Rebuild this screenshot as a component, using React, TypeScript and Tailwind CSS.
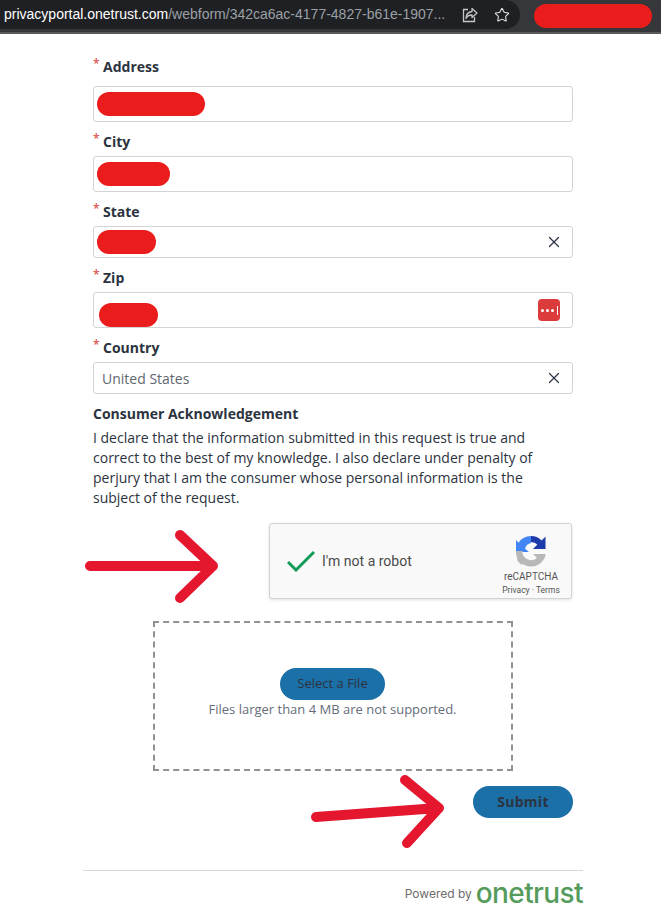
import { ReactNode } from "react";
import { Star, X } from "lucide-react";

function Redact({ w, h = 24, ml = 3, mt = 0 }: { w: number; h?: number; ml?: number; mt?: number }) {
  return (
    <span
      className="block rounded-full bg-[#ea1c1c]"
      style={{ width: w, height: h, marginLeft: ml, marginTop: mt }}
    />
  );
}

function Field({
  label,
  height,
  top = 10,
  gap = 4,
  children,
  right,
}: {
  label: string;
  height: number;
  top?: number;
  gap?: number;
  children?: ReactNode;
  right?: ReactNode;
}) {
  return (
    <div style={{ paddingTop: top }}>
      <label className="relative block h-5 pl-[10px] text-[14px] font-bold leading-5 text-[#2c3340]">
        <span className="absolute left-0 top-[-3px] text-[12px] font-semibold text-[#d9534f]">*</span>
        {label}
      </label>
      <div
        className="flex items-center justify-between rounded-[3px] border border-[#d4d4d4] bg-white pr-[9px]"
        style={{ height, marginTop: gap }}
      >
        {children}
        {right}
      </div>
    </div>
  );
}

function ClearIcon() {
  return <X size={18} strokeWidth={1.6} className="text-[#2c3340]" />;
}

function PasswordIcon() {
  return (
    <span className="mr-[3px] flex h-[22px] w-[22px] items-center justify-center gap-[2px] rounded-[4px] bg-[#dc3b3b]">
      <span className="h-[3px] w-[3px] rounded-full bg-white" />
      <span className="h-[3px] w-[3px] rounded-full bg-white" />
      <span className="h-[3px] w-[3px] rounded-full bg-white" />
      <span className="ml-px h-[9px] w-px bg-white" />
    </span>
  );
}

function ShareIcon() {
  return (
    <svg width="18" height="18" viewBox="0 0 18 18" fill="none" stroke="#c4c7c5" strokeWidth="1.3">
      <path d="M7 3.5H2.5v12h11V11" />
      <path d="M11 2.5l5 4.5-5 4.5V9c-3 0-5 1-6 3.5 0-4 2-6.5 6-7z" strokeLinejoin="round" />
    </svg>
  );
}

function RecaptchaLogo() {
  return (
    <svg width="32" height="32" viewBox="0 0 32 32">
      <path d="M16 1a15 15 0 0 1 10.6 4.4L30.5 1.5V14H18l4.4-4.4A9 9 0 0 0 16 7z" fill="#1c3aa9" />
      <path d="M16 1A15 15 0 0 0 3.5 7.7L1 5v12h13l-4-3.6A8 8 0 0 1 16 8z" fill="#4285f4" />
      <path d="M1 16.5h6.2A9 9 0 0 0 22 23l-4-4h13a15 15 0 0 1-.2 0A15 15 0 0 1 1 16.5z" fill="#b8b8b8" />
      <path d="M1 16h7l-2.5 3 5 5-4 6-4-4z" fill="#b8b8b8" />
    </svg>
  );
}

function Arrow({ className, w, h, d }: { className: string; w: number; h: number; d: string }) {
  return (
    <svg
      className={`absolute ${className}`}
      width={w}
      height={h}
      viewBox={`0 0 ${w} ${h}`}
      fill="none"
      stroke="#e5172f"
      strokeWidth="10"
      strokeLinecap="round"
      strokeLinejoin="round"
    >
      <path d={d} />
    </svg>
  );
}

export default function App() {
  return (
    <div className="relative h-[915px] w-[661px] overflow-hidden bg-white font-['Open_Sans',sans-serif]">
      {/* barra do navegador */}
      <div className="flex h-[34px] items-start border-b-2 border-[#5a5b5d] bg-[#36373a]">
        <div className="flex h-[29px] w-[520px] items-center justify-between rounded-r-full bg-[#1f2023] pl-1 pr-[10px] font-['Liberation_Sans',sans-serif] text-[14px]">
          <span className="whitespace-nowrap">
            <span className="text-white">privacyportal.onetrust.com</span>
            <span className="text-[#9aa0a6]">/webform/342ca6ac-4177-4827-b61e-1907...</span>
          </span>
          <span className="flex shrink-0 items-center gap-[15px]">
            <ShareIcon />
            <Star size={16} strokeWidth={1.6} className="text-[#e3e3e3]" />
          </span>
        </div>
        <div className="ml-[14px] mt-[4px] h-6 w-[118px] rounded-full bg-[#ea1c1c]" />
      </div>

      <main className="ml-[93px] w-[480px]">
        <Field label="Address" height={36} top={23} gap={9}>
          <Redact w={108} />
        </Field>
        <Field label="City" height={36}>
          <Redact w={73} />
        </Field>
        <Field label="State" height={32} right={<ClearIcon />}>
          <Redact w={59} />
        </Field>
        <Field label="Zip" height={36} right={<PasswordIcon />}>
          <Redact w={59} ml={5} mt={10} />
        </Field>
        <Field label="Country" height={32} right={<ClearIcon />}>
          <span className="pl-2 text-[14px] text-[#5f6670]">United States</span>
        </Field>

        <h3 className="mt-[10px] text-[14px] font-bold leading-5 text-[#2c3340]">Consumer Acknowledgement</h3>
        <p className="mt-1 text-[14px] leading-5 text-[#2c3340]">
          I declare that the information submitted in this request is true and
          <br />
          correct to the best of my knowledge. I also declare under penalty of
          <br />
          perjury that I am the consumer whose personal information is the
          <br />
          subject of the request.
        </p>

        <div className="ml-[176px] mt-[15px] flex h-[76px] w-[303px] items-center justify-between rounded-[3px] border border-[#d3d3d3] bg-[#f9f9f9] pl-[17px] pr-[10px] font-['Roboto',sans-serif] shadow-[0_1px_3px_rgba(0,0,0,0.12)]">
          <div className="flex items-center">
            <svg width="28" height="22" viewBox="0 0 28 22" fill="none" stroke="#0f9d58" strokeWidth="3">
              <path d="M1 12l8 8L27 2" />
            </svg>
            <span className="ml-[7px] text-[14px] text-[#4a4a4a]">I'm not a robot</span>
          </div>
          <div className="mt-[7px] flex w-[60px] flex-col items-center">
            <RecaptchaLogo />
            <span className="mt-[4px] text-[10px] leading-[12px] text-[#555]">reCAPTCHA</span>
            <span className="mt-[2px] whitespace-nowrap text-[8.5px] leading-[10px] text-[#555]">Privacy · Terms</span>
          </div>
        </div>

        <div className="ml-[60px] mt-[22px] flex h-[150px] w-[360px] flex-col items-center border-2 border-dashed border-[#919191] pr-px pt-[45px]">
          <button className="h-8 w-[105px] rounded-full bg-[#1c70a8] text-[13px] text-[#2c3340]">Select a File</button>
          <p className="text-[13px] leading-[18px] text-[#666d78]">Files larger than 4 MB are not supported.</p>
        </div>

        <div className="mt-[15px] flex justify-end">
          <button className="h-8 w-[100px] rounded-full bg-[#1c70a8] pb-px text-[14px] font-bold tracking-[0.3px] text-[#2c3340]">Submit</button>
        </div>
      </main>

      <footer className="ml-[83px] mt-[52px] flex h-[44px] w-[500px] items-center justify-end border-t border-[#d9d9d9]">
        <span className="mr-[4px] mt-[2px] font-['Inter',sans-serif] text-[12px] text-[#6c6c6c]">Powered by</span>
        <span className="font-['Inter',sans-serif] text-[28px] font-medium leading-none tracking-[-0.6px] text-[#559c5c]">onetrust</span>
      </footer>

      {/* setas de anotação por cima do formulário */}
      <Arrow className="left-[80px] top-[525px]" w={145} h={85} d="M10 41 L132 41 M100 10 L133 41 L100 73" />
      <Arrow className="left-[305px] top-[770px]" w={145} h={85} d="M11 47 L133 38 M100 10 L134 38 L102 73" />
    </div>
  );
}
